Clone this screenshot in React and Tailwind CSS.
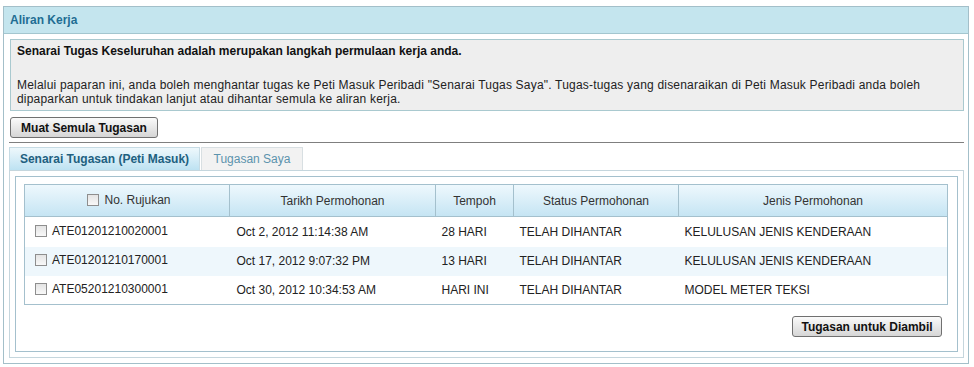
import React from 'react'

const rows = [
  { no: 'ATE01201210020001', date: 'Oct 2, 2012 11:14:38 AM', tempoh: '28 HARI', status: 'TELAH DIHANTAR', jenis: 'KELULUSAN JENIS KENDERAAN', bg: 'bg-white', h: 'h-[30px]' },
  { no: 'ATE01201210170001', date: 'Oct 17, 2012 9:07:32 PM', tempoh: '13 HARI', status: 'TELAH DIHANTAR', jenis: 'KELULUSAN JENIS KENDERAAN', bg: 'bg-[#eef7fc]', h: 'h-[29px]' },
  { no: 'ATE05201210300001', date: 'Oct 30, 2012 10:34:53 AM', tempoh: 'HARI INI', status: 'TELAH DIHANTAR', jenis: 'MODEL METER TEKSI', bg: 'bg-white', h: 'h-[29px]' },
]

function Box(){
  return <span className="inline-block w-[12px] h-[12px] border border-[#8e8e8e] bg-gradient-to-b from-[#e4e4e4] to-[#f8f8f8] align-middle" />
}

function Btn({ children, className = '' }){
  return (
    <button className={`h-[21px] rounded-[3px] border border-[#707070] bg-gradient-to-b from-[#fafafa] to-[#d6d6d6] font-bold text-[12px] text-[#111] ${className}`}>
      {children}
    </button>
  )
}

export default function App(){
  return (
    <div className="w-[974px] h-[367px] bg-white pt-[6px] pl-[3px] text-[12px] leading-[14px] text-[#222]" style={{ fontFamily: '"Liberation Sans", Arial, sans-serif' }}>
      <div className="w-[966px] h-[358px] border border-[#a3bfc9] flex flex-col">
        <div className="h-[27px] shrink-0 bg-[#c4e5ee] border-b border-[#a3c6cf] px-[6px] flex items-center font-bold text-[#1f6d93]">
          Aliran Kerja
        </div>
        <div className="pl-[5px] pr-[4px] pt-[5px]">
          <div className="ml-[1px] h-[72px] border border-[#a9c9cf] bg-[#eeeeee] px-[6px] pt-[4px]">
            <p className="font-bold text-[#111]">Senarai Tugas Keseluruhan adalah merupakan langkah permulaan kerja anda.</p>
            <p className="mt-[20px] tracking-[0.2px]">Melalui paparan ini, anda boleh menghantar tugas ke Peti Masuk Peribadi "Senarai Tugas Saya". Tugas-tugas yang disenaraikan di Peti Masuk Peribadi anda boleh dipaparkan untuk tindakan lanjut atau dihantar semula ke aliran kerja.</p>
          </div>
          <Btn className="ml-[1px] mt-[6px] w-[148px] block">Muat Semula Tugasan</Btn>
          <div className="mt-[4px] border-t border-[#7f7f7f]" />
          <div className="mt-[4px] flex h-[23px]">
            <div className="w-[191px] flex items-center justify-center bg-gradient-to-b from-[#eef8fc] to-[#bde2f2] border border-b-0 border-[#c6dbe4] font-bold text-[#21607f]">
              Senarai Tugasan (Peti Masuk)
            </div>
            <div className="ml-[1px] w-[102px] flex items-center justify-center bg-[#f2f2f2] border border-b-0 border-[#d8dfe2] text-[#5c93ad]">
              Tugasan Saya
            </div>
          </div>
          <div className="h-[188px] border border-[#c5d6dd] p-[5px]">
            <div className="h-full border border-[#a4c0cd] pt-[7px] pl-[8px] pr-[10px] flex flex-col">
              <table className="w-[923px] border-collapse border border-[#a4c0cd] table-fixed">
                <colgroup>
                  <col className="w-[205px]" />
                  <col className="w-[206px]" />
                  <col className="w-[78px]" />
                  <col className="w-[165px]" />
                  <col className="w-[269px]" />
                </colgroup>
                <thead>
                  <tr className="h-[32px] bg-gradient-to-b from-[#eef8fd] to-[#c4e4f3] text-[#333]">
                    <th className="font-normal border border-[#a4c0cd]">
                      <span className="inline-flex items-center gap-[5px] ml-[4px]"><Box />No. Rujukan</span>
                    </th>
                    <th className="font-normal border border-[#a4c0cd]">Tarikh Permohonan</th>
                    <th className="font-normal border border-[#a4c0cd]">Tempoh</th>
                    <th className="font-normal border border-[#a4c0cd]">Status Permohonan</th>
                    <th className="font-normal border border-[#a4c0cd]">Jenis Permohonan</th>
                  </tr>
                </thead>
                <tbody>
                  {rows.map(r => (
                    <tr key={r.no} className={`${r.h} ${r.bg}`}>
                      <td className="pl-[10px]">
                        <span className="inline-flex items-center gap-[5px]"><Box />{r.no}</span>
                      </td>
                      <td className="pl-[7px]">{r.date}</td>
                      <td className="pl-[6px]">{r.tempoh}</td>
                      <td className="pl-[6px]">{r.status}</td>
                      <td className="pl-[6px]">{r.jenis}</td>
                    </tr>
                  ))}
                </tbody>
              </table>
              <div className="flex justify-end mt-[11px] pr-[5px]">
                <Btn className="w-[150px]">Tugasan untuk Diambil</Btn>
              </div>
            </div>
          </div>
        </div>
      </div>
    </div>
  )
}
